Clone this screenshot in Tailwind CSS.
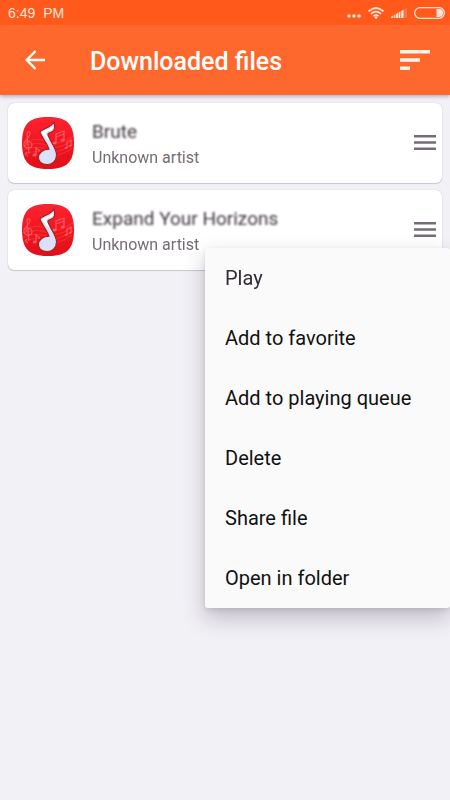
<!DOCTYPE html>
<html lang="en">
<head>
<meta charset="utf-8">
<meta name="viewport" content="width=device-width, initial-scale=1">
<title>Downloaded files</title>
<script src="https://cdn.jsdelivr.net/npm/@tailwindcss/browser@4"></script>
</head>
<body class="min-h-screen overflow-x-hidden bg-[#f2f1f6] font-[Roboto,sans-serif]">
<svg class="absolute size-0" aria-hidden="true">
  <defs>
    <linearGradient id="red" x1="0" y1="0" x2="0" y2="1">
      <stop offset="0" stop-color="#fb2431"/><stop offset=".5" stop-color="#f3151f"/><stop offset="1" stop-color="#df1018"/>
    </linearGradient>
  </defs>
  <symbol id="cover" viewBox="0 0 52 52">
    <path fill="url(#red)" d="M26 0C44 0 52 6 52 26S44 52 26 52 0 46 0 26 8 0 26 0Z"/>
    <g fill="none" stroke="#ff8c90" stroke-opacity=".55" stroke-width=".8">
      <path d="M1 25q16-5 25 0t25-6M1 29q16-5 25 0t25-6M1 33q16-5 25 0t25-6M2 37q15-5 24 0t24-6" stroke-opacity=".3"/>
      <path stroke-width="1.1" d="M6 39c-3-1-3-3-1-4M7 37 5 17c0-3 4-3 3 0-1 5-7 6-6 11 1 4 8 4 8 0 0-5-7-4-6 0"/>
      <path stroke-width="1.2" d="M34 26v-9l8-3v9M34 20l8-3M45 31v-6l4-2v6M14 38v-7l4 3"/>
    </g>
    <g fill="#ff8c90" fill-opacity=".55">
      <ellipse cx="32.500" cy="26" rx="2" ry="1.500"/><ellipse cx="40.500" cy="23" rx="2" ry="1.500"/>
      <ellipse cx="44" cy="31" rx="1.500" ry="1"/><ellipse cx="48" cy="29" rx="1.500" ry="1"/><ellipse cx="12.500" cy="38" rx="2" ry="1.500"/>
    </g>
    <path fill="#dce1fa" stroke="#a02020" stroke-width="1.100" stroke-linejoin="round" d="M32 5c1 4 .8 8-1.500 9.500-2 1.200-4 1-4.600 2.500-.4 1.500 1 3.400 2.300 5.700C30 27 34.500 32 34.500 38c0 5.500-4 9.500-9.300 9.500-5.500 0-8.700-3-8.700-7 0-5 5-8.300 10.500-8.300-1.500-5.500-6.500-10.700-9-16.700 1-4 11-4 14-10.500Z"/>
    <path fill="#fff" d="M19.500 15.500c2-2.500 9-3 11.800-6.500 0 2-.8 3.500-2.500 4.200-2.600.8-4.500 1-4.800 3.300l3.500 7c-3-2-6-5-8-8Z"/>
  </symbol>
  <symbol id="handle" viewBox="0 0 22 16"><path fill="#756d75" d="M0 0h22v2.400H0zM0 6.300h22v2.400H0zM0 12.600h22V15H0z"/></symbol>
</svg>

<header class="relative bg-[#ff682c] text-white shadow-[0_1px_4px_rgba(60,80,110,0.5)]">
  <div class="flex h-[25px] items-center justify-between bg-[#ff5a1b] pl-2 pr-[5px] text-[#ffe3d6]">
    <time class="font-['Liberation_Sans',sans-serif] text-[14px] leading-[26px]"><span class="pr-1">6:49</span> PM</time>
    <div class="flex items-center gap-[7px]">
      <svg class="mt-[7px] h-1 w-[14px]" viewBox="0 0 14 4" fill="currentColor"><circle cx="2" cy="2" r="1.800"/><circle cx="7" cy="2" r="1.800"/><circle cx="12" cy="2" r="1.800"/></svg>
      <svg class="h-3 w-4" viewBox="0 0 16 12" fill="none" stroke="currentColor" stroke-width="1.700"><path d="M.6 4.300q7.400-6.600 14.800 0M3 6.800q5-4.400 10 0M5.400 9.200q2.600-2.200 5.200 0"/><circle cx="8" cy="10.600" r="1.300" fill="currentColor" stroke="none"/></svg>
      <svg class="mt-px h-[10px] w-4" viewBox="0 0 16 10" fill="currentColor"><path fill-opacity=".75" d="M0 10V8.800L2 7.700V10zM2.500 10V7.400L4.500 6.300V10z"/><path d="M5 10V6l2-1.200V10zM7.600 10V4.600L9.400 3.600V10zM10.200 10V3.200L12.600 1.800V10z"/><path fill-opacity=".25" d="M13.500 10V1.200L16 0V10z"/></svg>
      <svg class="h-[12px] w-[31px]" viewBox="0 0 31 12"><rect x=".7" y=".7" width="29.600" height="10.600" rx="5.300" fill="none" stroke="currentColor" stroke-width="1.300"/><path fill="currentColor" d="M22.500 2H25a4 4 0 0 1 0 8h-2.500z"/></svg>
    </div>
  </div>
  <div class="flex h-[70px] items-center pl-[25px] pr-5">
    <button type="button" aria-label="Back"><svg class="block size-5" viewBox="0 0 20 20" fill="none" stroke="currentColor" stroke-width="2.400"><path d="M20 10H2M10.600 1 1.600 10l9 9"/></svg></button>
    <h1 class="ml-[45px] flex-1 pt-[3px] text-[25px] font-medium leading-8">Downloaded files</h1>
    <button type="button" aria-label="Sort"><svg class="block h-5 w-[30px]" viewBox="0 0 30 20" fill="#fff3ec"><path d="M0 0h30v3.400H0zM0 8.300h20v3.400H0zM0 16.600h10V20H0z"/></svg></button>
  </div>
</header>

<main>
  <ul class="flex flex-col gap-[7px] px-2 pt-2">
    <li class="flex h-20 items-center rounded-[6px] bg-white pl-[14px] pr-[6px] shadow-[0_1px_1px_rgba(60,50,80,0.2),0_0_1px_rgba(60,50,80,0.35)]">
      <svg class="h-[52px] w-[52px]" role="img" aria-label="Music file"><use href="#cover"/></svg>
      <div class="ml-[18px] flex-1 pt-[3px]">
        <h2 class="text-[19px] leading-[26px] text-[#3f363f] blur-[1px]">Brute</h2>
        <p class="text-[16px] leading-[26px] text-[#756d75]"><span class="blur-[0.5px]">Unknown</span> artist</p>
      </div>
      <button type="button" aria-label="Options for Brute"><svg class="block h-4 w-[22px]"><use href="#handle"/></svg></button>
    </li>
    <li class="relative flex h-20 items-center rounded-[6px] bg-white pl-[14px] pr-[6px] shadow-[0_1px_1px_rgba(60,50,80,0.2),0_0_1px_rgba(60,50,80,0.35)]">
      <svg class="h-[52px] w-[52px]" role="img" aria-label="Music file"><use href="#cover"/></svg>
      <div class="ml-[18px] flex-1 pt-[3px]">
        <h2 class="text-[19px] leading-[26px] text-[#3f363f] blur-[1px]">Expand Your Horizons</h2>
        <p class="text-[16px] leading-[26px] text-[#756d75] blur-[0.5px]">Unknown artist</p>
      </div>
      <button type="button" aria-label="Options for Expand Your Horizons"><svg class="block h-4 w-[22px]"><use href="#handle"/></svg></button>
      <div role="menu" class="absolute -right-2 top-[58px] flex w-[245px] flex-col rounded-[3px] bg-[#fafafa] text-[20px] text-[#111] shadow-[0_10px_22px_rgba(60,45,70,0.28),0_2px_5px_rgba(60,45,70,0.12)]">
        <button type="button" role="menuitem" class="h-[60px] px-5 text-left text-[#332b35] blur-[0.4px]">Play</button>
        <button type="button" role="menuitem" class="h-[60px] px-5 text-left">Add to favorite</button>
        <button type="button" role="menuitem" class="h-[60px] px-5 text-left">Add to playing queue</button>
        <button type="button" role="menuitem" class="h-[60px] px-5 text-left">Delete</button>
        <button type="button" role="menuitem" class="h-[60px] px-5 text-left">Share file</button>
        <button type="button" role="menuitem" class="h-[60px] px-5 text-left">Open in folder</button>
      </div>
    </li>
  </ul>
</main>
</body>
</html>
